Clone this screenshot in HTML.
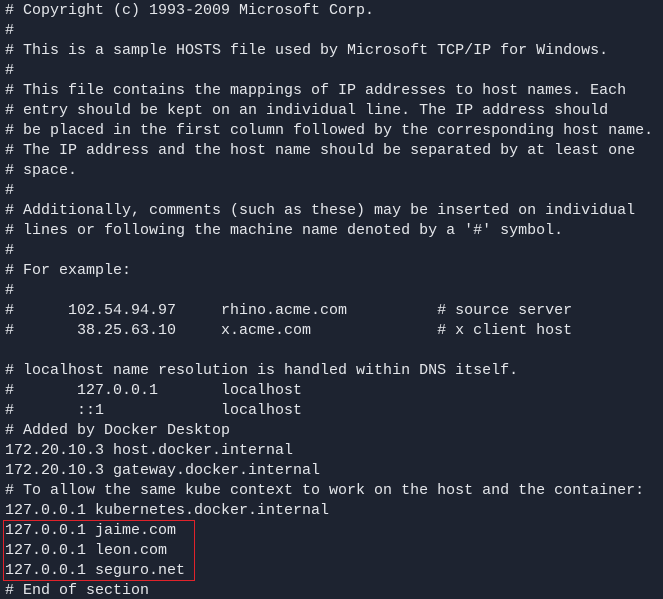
<!DOCTYPE html>
<html><head><meta charset="utf-8"><style>
html,body{margin:0;padding:0;background:#1d2330;width:663px;height:599px;overflow:hidden}
pre{margin:0;padding:0 0 0 5px;font-family:"Liberation Mono",monospace;font-size:15px;line-height:20px;color:#e4e6ea;position:relative;top:1px}
.box{position:absolute;left:3px;top:520px;width:190px;height:59px;border:1px solid #e0232b}
</style></head><body>
<pre># Copyright (c) 1993-2009 Microsoft Corp.
#
# This is a sample HOSTS file used by Microsoft TCP/IP for Windows.
#
# This file contains the mappings of IP addresses to host names. Each
# entry should be kept on an individual line. The IP address should
# be placed in the first column followed by the corresponding host name.
# The IP address and the host name should be separated by at least one
# space.
#
# Additionally, comments (such as these) may be inserted on individual
# lines or following the machine name denoted by a '#' symbol.
#
# For example:
#
#      102.54.94.97     rhino.acme.com          # source server
#       38.25.63.10     x.acme.com              # x client host

# localhost name resolution is handled within DNS itself.
#	127.0.0.1       localhost
#	::1             localhost
# Added by Docker Desktop
172.20.10.3 host.docker.internal
172.20.10.3 gateway.docker.internal
# To allow the same kube context to work on the host and the container:
127.0.0.1 kubernetes.docker.internal
127.0.0.1 jaime.com
127.0.0.1 leon.com
127.0.0.1 seguro.net
# End of section</pre>
<div class="box"></div>
</body></html>
